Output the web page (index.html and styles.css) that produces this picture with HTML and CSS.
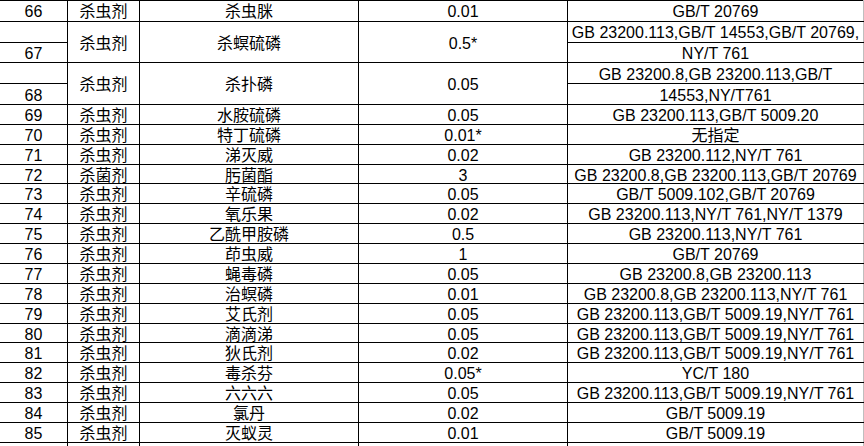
FILE: index.html
```html
<!DOCTYPE html>
<html>
<head>
<meta charset="utf-8">
<link rel="stylesheet" href="styles.css">
</head>
<body>
<table class="grid">
  <colgroup>
    <col class="c-no"><col class="c-cat"><col class="c-name"><col class="c-val"><col class="c-std">
  </colgroup>
  <tbody>
    <tr class="r-top"><td>66</td><td>杀虫剂</td><td>杀虫脒</td><td>0.01</td><td class="std">GB/T 20769</td></tr>
    <tr class="r-top"><td></td><td rowspan="2">杀虫剂</td><td rowspan="2">杀螟硫磷</td><td rowspan="2">0.5*</td><td class="std">GB 23200.113,GB/T 14553,GB/T 20769,</td></tr>
    <tr class="r-top"><td>67</td><td class="std">NY/T 761</td></tr>
    <tr class="r-top"><td></td><td rowspan="2">杀虫剂</td><td rowspan="2">杀扑磷</td><td rowspan="2">0.05</td><td class="std">GB 23200.8,GB 23200.113,GB/T</td></tr>
    <tr class="r-top"><td>68</td><td class="std">14553,NY/T761</td></tr>
    <tr><td>69</td><td>杀虫剂</td><td>水胺硫磷</td><td>0.05</td><td class="std">GB 23200.113,GB/T 5009.20</td></tr>
    <tr><td>70</td><td>杀虫剂</td><td>特丁硫磷</td><td>0.01*</td><td class="std">无指定</td></tr>
    <tr><td>71</td><td>杀虫剂</td><td>涕灭威</td><td>0.02</td><td class="std">GB 23200.112,NY/T 761</td></tr>
    <tr><td>72</td><td>杀菌剂</td><td>肟菌酯</td><td>3</td><td class="std">GB 23200.8,GB 23200.113,GB/T 20769</td></tr>
    <tr><td>73</td><td>杀虫剂</td><td>辛硫磷</td><td>0.05</td><td class="std">GB/T 5009.102,GB/T 20769</td></tr>
    <tr><td>74</td><td>杀虫剂</td><td>氧乐果</td><td>0.02</td><td class="std">GB 23200.113,NY/T 761,NY/T 1379</td></tr>
    <tr><td>75</td><td>杀虫剂</td><td>乙酰甲胺磷</td><td>0.5</td><td class="std">GB 23200.113,NY/T 761</td></tr>
    <tr><td>76</td><td>杀虫剂</td><td>茚虫威</td><td>1</td><td class="std">GB/T 20769</td></tr>
    <tr><td>77</td><td>杀虫剂</td><td>蝇毒磷</td><td>0.05</td><td class="std">GB 23200.8,GB 23200.113</td></tr>
    <tr><td>78</td><td>杀虫剂</td><td>治螟磷</td><td>0.01</td><td class="std">GB 23200.8,GB 23200.113,NY/T 761</td></tr>
    <tr><td>79</td><td>杀虫剂</td><td>艾氏剂</td><td>0.05</td><td class="std">GB 23200.113,GB/T 5009.19,NY/T 761</td></tr>
    <tr><td>80</td><td>杀虫剂</td><td>滴滴涕</td><td>0.05</td><td class="std">GB 23200.113,GB/T 5009.19,NY/T 761</td></tr>
    <tr><td>81</td><td>杀虫剂</td><td>狄氏剂</td><td>0.02</td><td class="std">GB 23200.113,GB/T 5009.19,NY/T 761</td></tr>
    <tr><td>82</td><td>杀虫剂</td><td>毒杀芬</td><td>0.05*</td><td class="std">YC/T 180</td></tr>
    <tr><td>83</td><td>杀虫剂</td><td>六六六</td><td>0.05</td><td class="std">GB 23200.113,GB/T 5009.19,NY/T 761</td></tr>
    <tr><td>84</td><td>杀虫剂</td><td>氯丹</td><td>0.02</td><td class="std">GB/T 5009.19</td></tr>
    <tr><td>85</td><td>杀虫剂</td><td>灭蚁灵</td><td>0.01</td><td class="std">GB/T 5009.19</td></tr>
    <tr><td></td><td></td><td></td><td></td><td class="std"></td></tr>
  </tbody>
</table>
</body>
</html>
```
FILE: styles.css
```css
html, body {
  margin: 0;
  padding: 0;
  background: #ffffff;
  overflow: hidden;
}

.grid {
  border-collapse: collapse;
  table-layout: fixed;
  width: 864px;
  margin-left: -1px;
  font-family: "Liberation Sans", "Noto Sans CJK SC", sans-serif;
  font-size: 16px;
  color: #000000;
}

.c-no { width: 68px; }
.c-cat { width: 72px; }
.c-name { width: 219px; }
.c-val { width: 209px; }
.c-std { width: 296px; }

.grid td {
  border: 1px solid #000000;
  padding: 2px 0 0 0;
  height: 16.88px;
  line-height: 15px;
  text-align: center;
  vertical-align: middle;
  white-space: nowrap;
  overflow: hidden;
}

.grid tr.r-top td {
  height: 17.8px;
}

.grid td.std {
  border-right-color: #bfbfbf;
}
```
